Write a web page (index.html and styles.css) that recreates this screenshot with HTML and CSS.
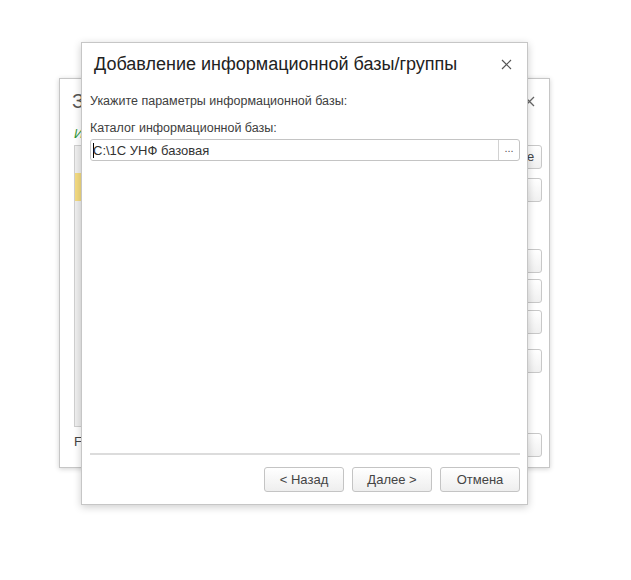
FILE: index.html
```html
<!DOCTYPE html>
<html lang="ru">
<head>
    <meta charset="UTF-8">
    <title>Добавление информационной базы/группы</title>
    <link rel="stylesheet" href="styles.css">
</head>
<body>
    <div class="desktop">
        <!-- back window: launcher -->
        <div class="window back">
            <div class="back-head">
                <span class="back-title">Запуск 1С:Предприятия</span>
                <span class="close">
                    <svg width="11" height="11" viewBox="0 0 11 11"><path d="M1 1L10 10M10 1L1 10" stroke="#666" stroke-width="1.3" fill="none"/></svg>
                </span>
            </div>
            <div class="back-body">
                <div class="back-main">
                    <div class="back-caption">Информационные базы</div>
                    <div class="base-list">
                        <div class="list-row"></div>
                        <div class="list-row selected"></div>
                    </div>
                    <div class="back-foot">F</div>
                </div>
                <div class="back-buttons">
                    <div class="side-btn">1С:Предприятие</div>
                    <div class="side-btn gap-9">Конфигуратор</div>
                    <div class="side-btn gap-47">Добавить...</div>
                    <div class="side-btn gap-6">Изменить...</div>
                    <div class="side-btn gap-7">Удалить</div>
                    <div class="side-btn gap-15">Настройка...</div>
                    <div class="side-btn gap-60">Выход</div>
                </div>
            </div>
        </div>

        <!-- front window: wizard -->
        <div class="window front">
            <div class="front-head">
                <span class="front-title">Добавление информационной базы/группы</span>
                <span class="close">
                    <svg width="11" height="11" viewBox="0 0 11 11"><path d="M1 1L10 10M10 1L1 10" stroke="#555" stroke-width="1.2" fill="none"/></svg>
                </span>
            </div>
            <div class="front-body">
                <p class="label first">Укажите параметры информационной базы:</p>
                <p class="label">Каталог информационной базы:</p>
                <div class="path-field">
                    <span class="path-text"><span class="caret"></span>C:\1C УНФ базовая</span>
                    <span class="path-btn">...</span>
                </div>
            </div>
            <div class="front-foot">
                <div class="separator"></div>
                <div class="buttons">
                    <button class="button">&lt; Назад</button>
                    <button class="button">Далее &gt;</button>
                    <button class="button">Отмена</button>
                </div>
            </div>
        </div>
    </div>
</body>
</html>
```

FILE: styles.css
```css
body {
    margin: 0;
    background-color: #ffffff;
    font-family: 'Liberation Sans', Arial, sans-serif;
    color: #333;
}

.desktop {
    position: relative;
    width: 631px;
    height: 580px;
    overflow: hidden;
}

.window {
    position: absolute;
    background-color: #ffffff;
    border: 1px solid #c6c6c6;
    box-sizing: border-box;
    display: flex;
    flex-direction: column;
}

.close {
    display: flex;
}

/* back window */

.back {
    left: 59px;
    top: 78px;
    width: 491px;
    height: 390px;
    box-shadow: 0 1px 5px rgba(0, 0, 0, 0.18);
}

.back-head {
    height: 44px;
    flex-shrink: 0;
    display: flex;
    align-items: center;
    justify-content: space-between;
    padding: 0 14px 0 12px;
}

.back-title {
    font-size: 20px;
    color: #555;
    white-space: nowrap;
}

.back-body {
    flex: 1;
    display: flex;
    padding: 0 7px 0 14px;
    min-height: 0;
}

.back-main {
    flex: 1;
    display: flex;
    flex-direction: column;
}

.back-caption {
    font-size: 13px;
    line-height: 16px;
    color: #2f9a3a;
    font-style: italic;
    margin-top: 3px;
    height: 19px;
    white-space: nowrap;
}

.base-list {
    height: 282px;
    box-sizing: border-box;
    border: 1px solid #cfcfcf;
    background: linear-gradient(to right, #efefef 0, #efefef 6px, #ffffff 6px);
    margin-right: 12px;
}

.list-row {
    height: 27px;
}

.list-row.selected {
    background-color: #f5dc82;
    height: 28px;
}

.back-foot {
    font-size: 13px;
    line-height: 16px;
    color: #444;
    margin-top: 7px;
}

.back-buttons {
    width: 110px;
    display: flex;
    flex-direction: column;
    padding-top: 22px;
}

.side-btn {
    height: 24px;
    flex-shrink: 0;
    box-sizing: border-box;
    border: 1px solid #c8c8c8;
    border-radius: 3px;
    background: linear-gradient(#ffffff, #f0f0f0);
    font-size: 13px;
    line-height: 22px;
    text-align: center;
    padding-right: 6px;
    color: #444;
    white-space: nowrap;
}

.gap-6 { margin-top: 6px; }
.gap-7 { margin-top: 7px; }
.gap-9 { margin-top: 9px; }
.gap-15 { margin-top: 15px; }
.gap-47 { margin-top: 47px; }
.gap-60 { margin-top: 60px; }

/* front window */

.front {
    left: 81px;
    top: 42px;
    width: 447px;
    height: 463px;
    box-shadow: 0 2px 8px rgba(0, 0, 0, 0.2);
}

.front-head {
    height: 42px;
    flex-shrink: 0;
    display: flex;
    align-items: center;
    justify-content: space-between;
    padding: 0 15px 0 12px;
}

.front-title {
    font-size: 18px;
    color: #222;
    padding-top: 1px;
}

.front-body {
    flex: 1;
    padding: 0 7px 0 8px;
}

.label {
    margin: 11px 0 0;
    font-size: 12.5px;
    line-height: 16px;
    color: #404040;
}

.label.first {
    margin-top: 8px;
}

.path-field {
    margin-top: 3px;
    height: 22px;
    border: 1px solid #c4c4c4;
    border-radius: 3px;
    box-sizing: border-box;
    display: flex;
    align-items: center;
}

.path-text {
    flex: 1;
    font-size: 13px;
    color: #333;
    padding-left: 2px;
    display: flex;
    align-items: center;
}

.caret {
    width: 1px;
    height: 15px;
    background-color: #000;
    margin-right: -1px;
}

.path-btn {
    width: 20px;
    height: 100%;
    border-left: 1px solid #d2d2d2;
    font-size: 11px;
    color: #555;
    text-align: center;
    line-height: 16px;
}

.front-foot {
    flex-shrink: 0;
    padding: 0 7px 12px 8px;
}

.separator {
    height: 2px;
    background-color: #dcdcdc;
    margin-bottom: 12px;
}

.buttons {
    display: flex;
    justify-content: flex-end;
    gap: 8px;
}

.button {
    width: 80px;
    height: 25px;
    border: 1px solid #c4c4c4;
    border-radius: 3px;
    background: linear-gradient(#ffffff, #eeeeee);
    font-family: 'Liberation Sans', Arial, sans-serif;
    font-size: 13px;
    color: #444;
    padding: 0;
    cursor: pointer;
}
```
